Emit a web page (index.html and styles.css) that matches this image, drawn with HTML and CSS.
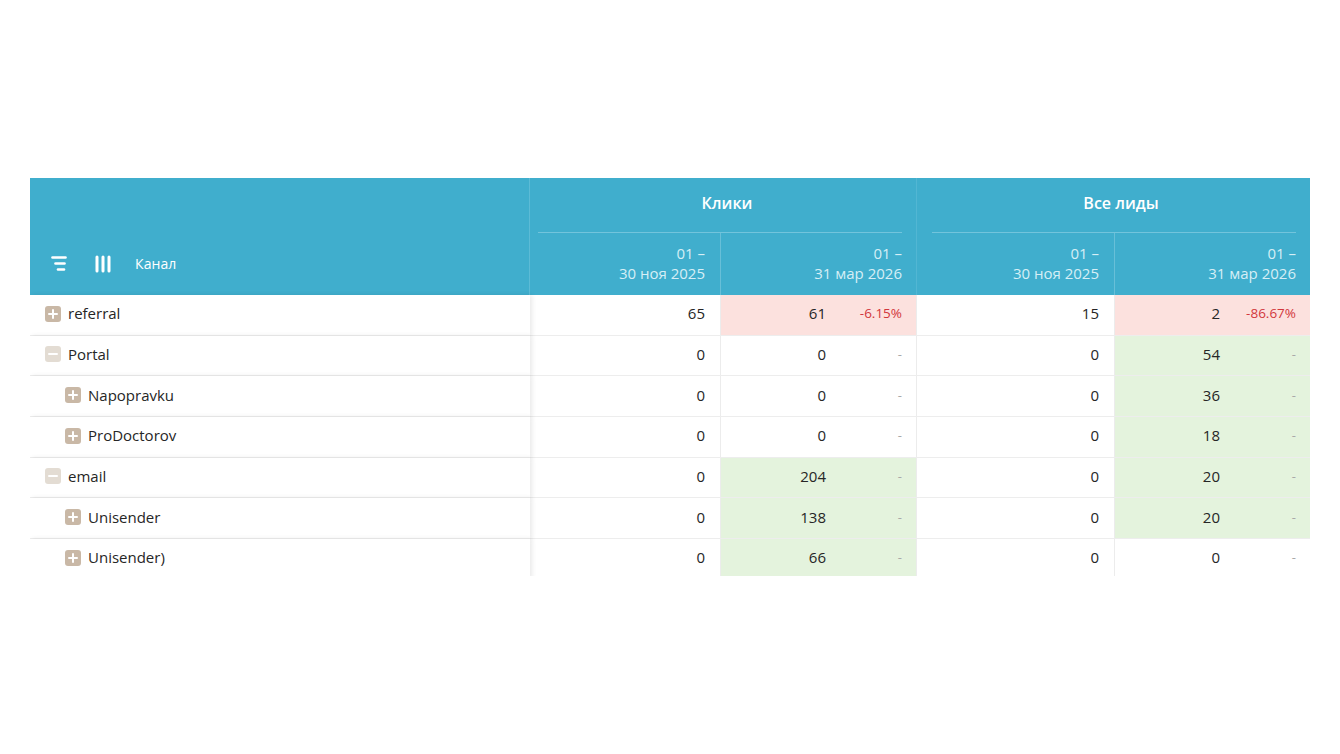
FILE: index.html
```html
<!DOCTYPE html>
<html lang="ru">
<head>
<meta charset="utf-8">
<title>Отчёт</title>
<link rel="stylesheet" href="styles.css">
</head>
<body>
<div class="page">
  <div class="report">
    <div class="head">
      <div class="h-channel">
        <svg class="ico" width="18" height="18" viewBox="0 0 18 18">
          <g stroke="#fff" stroke-width="2.6" stroke-linecap="round">
            <line x1="2.5" y1="2.5" x2="15.5" y2="2.5"/>
            <line x1="5.5" y1="8.5" x2="14.5" y2="8.5"/>
            <line x1="8" y1="14.5" x2="14" y2="14.5"/>
          </g>
        </svg>
        <svg class="ico ico2" width="18" height="18" viewBox="0 0 18 18">
          <g stroke="#fff" stroke-width="3" stroke-linecap="round">
            <line x1="3" y1="2" x2="3" y2="16"/>
            <line x1="9" y1="2" x2="9" y2="16"/>
            <line x1="15" y1="2" x2="15" y2="16"/>
          </g>
        </svg>
        <span class="h-label">Канал</span>
      </div>
      <div class="h-group g1">
        <div class="h-title">Клики</div>
        <div class="h-subs">
          <div class="h-sub w190">01 –<br>30 ноя 2025</div>
          <div class="h-sub w196 sep">01 –<br>31 мар 2026</div>
        </div>
      </div>
      <div class="h-group g2">
        <div class="h-title">Все лиды</div>
        <div class="h-subs">
          <div class="h-sub w198">01 –<br>30 ноя 2025</div>
          <div class="h-sub w196 sep">01 –<br>31 мар 2026</div>
        </div>
      </div>
    </div>
    <div class="body">
      <div class="row">
        <div class="c-name"><span class="box plus"></span>referral</div>
        <div class="c-num">65</div>
        <div class="c-cmp red"><span class="v">61</span><span class="d neg">-6.15%</span></div>
        <div class="c-num bl">15</div>
        <div class="c-cmp red"><span class="v">2</span><span class="d neg">-86.67%</span></div>
      </div>
      <div class="row">
        <div class="c-name"><span class="box minus"></span>Portal</div>
        <div class="c-num">0</div>
        <div class="c-cmp"><span class="v">0</span><span class="d">-</span></div>
        <div class="c-num bl">0</div>
        <div class="c-cmp green"><span class="v">54</span><span class="d">-</span></div>
      </div>
      <div class="row">
        <div class="c-name lvl1"><span class="box plus"></span>Napopravku</div>
        <div class="c-num">0</div>
        <div class="c-cmp"><span class="v">0</span><span class="d">-</span></div>
        <div class="c-num bl">0</div>
        <div class="c-cmp green"><span class="v">36</span><span class="d">-</span></div>
      </div>
      <div class="row">
        <div class="c-name lvl1"><span class="box plus"></span>ProDoctorov</div>
        <div class="c-num">0</div>
        <div class="c-cmp"><span class="v">0</span><span class="d">-</span></div>
        <div class="c-num bl">0</div>
        <div class="c-cmp green"><span class="v">18</span><span class="d">-</span></div>
      </div>
      <div class="row">
        <div class="c-name"><span class="box minus"></span>email</div>
        <div class="c-num">0</div>
        <div class="c-cmp green"><span class="v">204</span><span class="d">-</span></div>
        <div class="c-num bl">0</div>
        <div class="c-cmp green"><span class="v">20</span><span class="d">-</span></div>
      </div>
      <div class="row">
        <div class="c-name lvl1"><span class="box plus"></span>Unisender</div>
        <div class="c-num">0</div>
        <div class="c-cmp green"><span class="v">138</span><span class="d">-</span></div>
        <div class="c-num bl">0</div>
        <div class="c-cmp green"><span class="v">20</span><span class="d">-</span></div>
      </div>
      <div class="row">
        <div class="c-name lvl1"><span class="box plus"></span>Unisender)</div>
        <div class="c-num">0</div>
        <div class="c-cmp green"><span class="v">66</span><span class="d">-</span></div>
        <div class="c-num bl">0</div>
        <div class="c-cmp"><span class="v">0</span><span class="d">-</span></div>
      </div>
    </div>
  </div>
</div>
</body>
</html>
```

FILE: styles.css
```css
html, body {
  margin: 0;
  padding: 0;
  background: #ffffff;
}

body {
  font-family: "Open Sans", "Noto Sans", sans-serif;
  color: #262626;
}

.page {
  padding: 178px 30px 0 30px;
}

.report {
  width: 1280px;
  height: 398px;
  overflow: hidden;
}

/* ---------- header ---------- */
.head {
  display: flex;
  height: 117px;
  background: #40aecd;
  color: #fff;
}

.h-channel {
  width: 500px;
  box-sizing: border-box;
  border-right: 1px solid #5cbbd6;
  display: flex;
  align-items: center;
  padding: 55px 0 0 20px;
}

.ico {
  display: block;
  flex: none;
}

.ico2 {
  margin-left: 26px;
}

.h-label {
  margin-left: 23px;
  font-size: 14px;
  font-weight: 500;
  letter-spacing: 0.1px;
  padding-bottom: 2px;
}

.h-group {
  display: flex;
  flex-direction: column;
}

.g1 {
  width: 386px;
}

.g2 {
  width: 394px;
  box-sizing: border-box;
  border-left: 1px solid #52b6d3;
}

.h-title {
  height: 55px;
  display: flex;
  align-items: center;
  justify-content: center;
  padding-left: 14px;
  padding-bottom: 4px;
  box-sizing: border-box;
  font-size: 16px;
  font-weight: 600;
  border-bottom: 1px solid #72c4dc;
}

.g1 .h-title {
  margin: 0 14px 0 8px;
}

.g2 .h-title {
  margin: 0 14px 0 15px;
}

.h-subs {
  display: flex;
  flex: 1;
}

.h-sub {
  box-sizing: border-box;
  display: flex;
  flex-direction: column;
  justify-content: center;
  align-items: flex-end;
  text-align: right;
  font-size: 15px;
  line-height: 20px;
  color: #d6eef6;
  padding-right: 15px;
  padding-bottom: 2px;
}

.h-sub.sep {
  border-left: 1px solid #68bfd8;
  padding-right: 14px;
}

.w190 { width: 190px; }
.w196 { width: 196px; }
.g2 .w198 { width: 197px; }

/* ---------- body ---------- */
.row {
  display: grid;
  grid-template-columns: 500px 190px 196px 198px 196px;
  height: 40.67px;
  box-sizing: border-box;
  border-bottom: 1px solid #ededed;
}

.row > div {
  display: flex;
  align-items: center;
  font-size: 15px;
  box-sizing: border-box;
  padding-bottom: 3px;
}

.c-name {
  padding-left: 15px;
  position: relative;
  z-index: 1;
  background: #fff;
  box-shadow: 2px 0 5px rgba(0, 0, 0, 0.09);
  margin-bottom: -1px;
  border-bottom: 1px solid #ededed;
}

.c-name.lvl1 {
  padding-left: 35px;
}

.box {
  width: 16px;
  height: 16px;
  border-radius: 3px;
  margin-right: 7px;
  margin-top: 1px;
  flex: none;
  position: relative;
  background: #c9b8a6;
}

.box::before,
.box::after {
  content: "";
  position: absolute;
  background: #fff;
  border-radius: 1px;
}

.box::before {
  left: 3px;
  right: 3px;
  top: 7px;
  height: 2px;
}

.plus::after {
  top: 3px;
  bottom: 3px;
  left: 7px;
  width: 2px;
}

.minus {
  background: #e3dcd3;
}

.minus::after {
  display: none;
}

.c-num {
  justify-content: flex-end;
  padding-right: 15px;
}

.c-num.bl {
  border-left: 1px solid #ececec;
}

.c-cmp {
  border-left: 1px solid #ececec;
}

.c-cmp .v {
  width: 105px;
  text-align: right;
  flex: none;
}

.c-cmp .d {
  flex: 1;
  text-align: right;
  padding-right: 14px;
  font-size: 13px;
  color: #a9a9a9;
}

.c-cmp .d.neg {
  font-size: 13.5px;
  color: #d2373c;
}

.red {
  background: #fce1de;
}

.green {
  background: #e4f3dd;
}
```
